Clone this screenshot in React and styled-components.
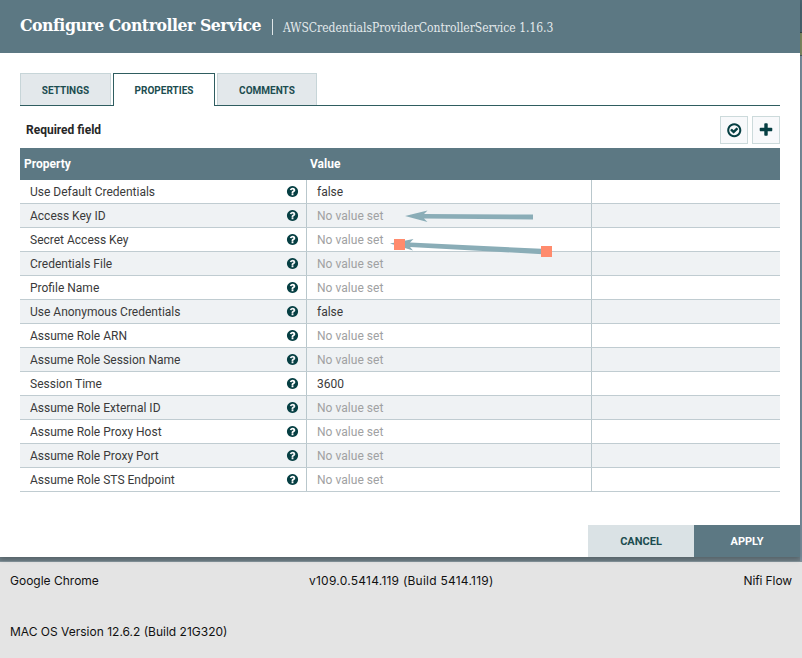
import React from "react";
import styled, { createGlobalStyle } from "styled-components";

const GlobalStyle = createGlobalStyle`
  * { box-sizing: border-box; }
  body { margin: 0; background: #e4e4e4; font-family: Roboto, "Liberation Sans", sans-serif; color: #262626; }
`;

const Page = styled.div`
  width: 802px;
  height: 658px;
  overflow: hidden;
  background: #e4e4e4;
`;
const Backdrop = styled.div`
  display: flex;
  height: 562px;
  background: #6f7f87;
  border-bottom: 1px solid #84939a;
`;
const Dialog = styled.section`
  position: relative;
  display: flex;
  flex-direction: column;
  width: 800px;
  height: 557px;
  background: #fff;
  box-shadow: 0 2px 5px rgba(0, 0, 0, 0.25);
`;
const CanvasEdge = styled.div`
  width: 2px;
  height: 561px;
  background: linear-gradient(#4b6673 0 32px, #34474c 32px 33px, #808c65 33px 55px, #4d5e63 55px 56px, #7c91a0 56px);
`;
const Header = styled.header`
  display: flex;
  align-items: center;
  height: 53px;
  padding-left: 20px;
  background: #5c7883;
  color: #fff;
  font-family: "Roboto Slab", "DejaVu Serif Condensed", "DejaVu Serif", serif;
  white-space: nowrap;
`;
const Title = styled.h1`
  margin: 0;
  width: 252px;
  font-size: 17.5px;
  line-height: 50px;
  height: 53px;
  font-weight: 700;
  letter-spacing: -0.47px;
`;
const Subtitle = styled.span`
  display: flex;
  align-items: center;
  height: 16px;
  padding: 2px 0 0 10px;
  border-left: 1px solid #dfe6e8;
  font-size: 12px;
  letter-spacing: -0.01px;
  color: #e4eaec;
`;
const Tabs = styled.nav`
  display: flex;
  gap: 2px;
  height: 33px;
  margin: 20px 20px 0;
  border-bottom: 1px solid #2f5d60;
`;
const Tab = styled.div`
  width: ${(p) => p.$width}px;
  height: ${(p) => (p.$active ? 33 : 32)}px;
  border: 1px solid ${(p) => (p.$active ? "#2f5d60" : "#c7d5d8")};
  border-bottom: 0;
  background: ${(p) => (p.$active ? "#fff" : "#e3e8eb")};
  color: #1c4d50;
  font-size: 10px;
  font-weight: 700;
  line-height: 34px;
  text-align: center;
`;
const Toolbar = styled.div`
  display: flex;
  align-items: center;
  gap: 4px;
  height: 42px;
  padding: 6px 20px 0 26px;
`;
const RequiredLabel = styled.span`
  flex: 1;
  font-size: 12px;
  font-weight: 700;
`;
const IconButton = styled.button`
  display: grid;
  place-items: center;
  width: 28px;
  height: 28px;
  padding: 0;
  border: 1px solid #ccdadb;
  background: #f8f9fb;
  color: #004849;
`;
const Icon = styled.svg`
  display: block;
  width: ${(p) => p.$size}px;
  height: ${(p) => p.$size}px;
  fill: #063f43;
`;
const Table = styled.div`
  width: 760px;
  margin-left: 20px;
`;
const TableHead = styled.div`
  display: grid;
  grid-template-columns: 286px 474px;
  height: 32px;
  background: #5c7883;
  color: #fff;
  font-size: 12px;
  font-weight: 700;
  line-height: 32px;
`;
const HeadCell = styled.span`
  padding-left: 4px;
`;
const Row = styled.div`
  display: grid;
  grid-template-columns: 287px 285px 188px;
  height: 24px;
  border-bottom: 1px solid #c0ccd1;
  background: ${(p) => (p.$shaded ? "#eff2f4" : "#fff")};
`;
const Cell = styled.div`
  display: flex;
  align-items: center;
  justify-content: space-between;
  padding: 0 7px 0 10px;
  border-right: ${(p) => (p.$last ? 0 : 1)}px solid #b9c7cc;
  color: ${(p) => (p.$muted ? "#a0a1a2" : "#3a3a3a")};
  font-size: 12px;
  letter-spacing: ${(p) => (p.$muted ? 0.04 : 0)}px;
  line-height: 23px;
  white-space: nowrap;
`;
const CellText = styled.span`
  height: 23px;
  line-height: 24px;
`;
const Actions = styled.footer`
  display: flex;
  justify-content: flex-end;
  margin-top: auto;
`;
const ActionButton = styled.button`
  width: 106px;
  height: 32px;
  padding: 0;
  border: 0;
  background: ${(p) => (p.$primary ? "#5c7883" : "#dae2e5")};
  color: ${(p) => (p.$primary ? "#fff" : "#1c4d50")};
  font: 700 11px Roboto, sans-serif;
`;
const Annotations = styled.svg`
  position: absolute;
  left: 385px;
  top: 204px;
  width: 180px;
  height: 60px;
`;
const SystemInfo = styled.div`
  display: grid;
  grid-template-columns: 299px 1fr auto;
  row-gap: 33px;
  padding: 10px 10px 0;
  color: #111;
  font: 12px/18px Inter, sans-serif;
`;
const InfoText = styled.span`
  white-space: nowrap;
  letter-spacing: ${(p) => p.$tracking || 0}px;
  grid-column: ${(p) => (p.$wide ? "1 / -1" : "auto")};
`;

const glyphs = {
  plus: "M1600 736v192q0 40-28 68t-68 28h-416v416q0 40-28 68t-68 28h-192q-40 0-68-28t-28-68v-416h-416q-40 0-68-28t-28-68v-192q0-40 28-68t68-28h416v-416q0-40 28-68t68-28h192q40 0 68 28t28 68v416h416q40 0 68 28t28 68z",
  help: "M1024 1376v-192q0-14-9-23t-23-9h-192q-14 0-23 9t-9 23v192q0 14 9 23t23 9h192q14 0 23-9t9-23zm256-672q0-88-55.5-163t-138.5-116-170-41q-243 0-371 213-15 24 8 42l132 100q7 6 19 6 16 0 25-12 53-68 86-92 34-24 86-24 48 0 85.5 26t37.5 59q0 38-20 61t-68 45q-63 28-115.5 86.5t-52.5 125.5v36q0 14 9 23t23 9h192q14 0 23-9t9-23q0-19 21.5-49.5t54.5-49.5q32-18 49-28.5t46-35 44.5-48 28-60.5 12.5-81zm384 192q0 209-103 385.5t-279.5 279.5-385.5 103-385.5-103-279.5-279.5-103-385.5 103-385.5 279.5-279.5 385.5-103 385.5 103 279.5 279.5 103 385.5z",
  check: "M1299 813l-422 422q-19 19-45 19t-45-19l-294-294q-19-19-19-45t19-45l102-102q19-19 45-19t45 19l147 147 275-275q19-19 45-19t45 19l102 102q19 19 19 45t-19 45zm141 83q0-148-73-273t-198-198-273-73-273 73-198 198-73 273 73 273 198 198 273 73 273-73 198-198 73-273zm224 0q0 209-103 385.5t-279.5 279.5-385.5 103-385.5-103-279.5-279.5-103-385.5 103-385.5 279.5-279.5 385.5-103 385.5 103 279.5 279.5 103 385.5z",
};

function Glyph({ name, size }) {
  return (
    <Icon $size={size} viewBox="0 0 1792 1792" aria-hidden="true">
      <path d={glyphs[name]} />
    </Icon>
  );
}

const properties = [
  ["Use Default Credentials", "false"],
  ["Access Key ID"],
  ["Secret Access Key"],
  ["Credentials File"],
  ["Profile Name"],
  ["Use Anonymous Credentials", "false"],
  ["Assume Role ARN"],
  ["Assume Role Session Name"],
  ["Session Time", "3600"],
  ["Assume Role External ID"],
  ["Assume Role Proxy Host"],
  ["Assume Role Proxy Port"],
  ["Assume Role STS Endpoint"],
];

export default function App() {
  return (
    <Page>
      <GlobalStyle />
      <Backdrop>
        <Dialog>
          <Header>
            <Title>Configure Controller Service</Title>
            <Subtitle>AWSCredentialsProviderControllerService 1.16.3</Subtitle>
          </Header>
          <Tabs>
            <Tab $width={91}>SETTINGS</Tab>
            <Tab $width={102} $active>PROPERTIES</Tab>
            <Tab $width={100}>COMMENTS</Tab>
          </Tabs>
          <Toolbar>
            <RequiredLabel>Required field</RequiredLabel>
            <IconButton aria-label="Verify"><Glyph name="check" size={16.5} /></IconButton>
            <IconButton aria-label="Add property"><Glyph name="plus" size={16} /></IconButton>
          </Toolbar>
          <Table>
            <TableHead>
              <HeadCell>Property</HeadCell>
              <HeadCell>Value</HeadCell>
            </TableHead>
            {properties.map(([name, value], i) => (
              <Row key={name} $shaded={i % 2 === 1}>
                <Cell><CellText>{name}</CellText><Glyph name="help" size={13} /></Cell>
                <Cell $muted={!value}><CellText>{value || "No value set"}</CellText></Cell>
                <Cell $last />
              </Row>
            ))}
          </Table>
          <Actions>
            <ActionButton>CANCEL</ActionButton>
            <ActionButton $primary>APPLY</ActionButton>
          </Actions>
          <Annotations viewBox="385 204 180 60">
            <path fill="#8aadb7" d="M405 216L427.500 210.500L424 214L533 214.500V219.500L424 218.500L427.500 222Z" />
            <path fill="#8aadb7" d="M390 243.500L413.500 239L410 242.500L547 249V254.500L410 247L413 250.500Z" />
            <rect x="394" y="239" width="11" height="11" fill="#ff8b6d" />
            <rect x="541" y="246" width="11" height="11" fill="#ff8b6d" />
          </Annotations>
        </Dialog>
        <CanvasEdge />
      </Backdrop>
      <SystemInfo>
        <InfoText>Google Chrome</InfoText>
        <InfoText $tracking={0.24}>v109.0.5414.119 (Build 5414.119)</InfoText>
        <InfoText $tracking={-0.1}>Nifi Flow</InfoText>
        <InfoText $wide>MAC OS Version 12.6.2 (Build 21G320)</InfoText>
      </SystemInfo>
    </Page>
  );
}
